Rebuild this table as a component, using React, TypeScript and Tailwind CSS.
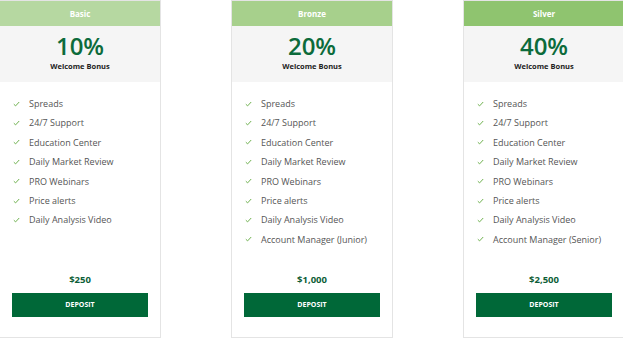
import React from "react";

type Plan = {
  name: string;
  header: string;
  pct: string;
  price: string;
  features: string[];
};

const base = [
  "Spreads",
  "24/7 Support",
  "Education Center",
  "Daily Market Review",
  "PRO Webinars",
  "Price alerts",
  "Daily Analysis Video",
];

const plans: Plan[] = [
  { name: "Basic", header: "bg-[#b6d8a1]", pct: "10%", price: "$250", features: base },
  {
    name: "Bronze",
    header: "bg-[#a7d08c]",
    pct: "20%",
    price: "$1,000",
    features: [...base, "Account Manager (Junior)"],
  },
  {
    name: "Silver",
    header: "bg-[#8fc46f]",
    pct: "40%",
    price: "$2,500",
    features: [...base, "Account Manager (Senior)"],
  },
];

function Check() {
  return (
    <svg width="7" height="6" viewBox="0 0 7 6" className="shrink-0">
      <path d="M0.8 3.2 L2.6 4.9 L6.2 1" fill="none" stroke="#6fb14f" strokeWidth="1" />
    </svg>
  );
}

function Card({ p }: { p: Plan }) {
  return (
    <div className="w-[162px] h-[338px] shrink-0 flex flex-col border border-[#e4e4e4] bg-white">
      <div className={`h-[25px] ${p.header} flex items-center justify-center text-white font-bold text-[8px]`}>
        {p.name}
      </div>
      <div className="h-[56px] bg-[#f5f5f5] flex flex-col items-center pt-[8px]">
        <div className="text-[24px] leading-[24px] text-[#0c6b3b] font-semibold">{p.pct}</div>
        <div className="text-[7.5px] leading-[10px] font-bold text-[#222] mt-[3px]">Welcome Bonus</div>
      </div>
      <div className="flex-1 flex flex-col pt-[12px]">
        {p.features.map((f) => (
          <div key={f} className="h-[19.4px] flex items-center gap-[9px] pl-[13px] text-[9px] text-[#555]">
            <Check />
            <span>{f}</span>
          </div>
        ))}
      </div>
      <div className="text-center text-[9.5px] font-bold text-[#0d5e37] mb-[6px]">{p.price}</div>
      <div className="mx-[12px] h-[24px] bg-[#006838] flex items-center justify-center text-white text-[7px] font-bold mb-[20px]">
        DEPOSIT
      </div>
    </div>
  );
}

export default function App() {
  return (
    <div
      className="w-[624px] h-[338px] overflow-hidden bg-white flex gap-[70px] ml-[-1px]"
      style={{ fontFamily: "'Open Sans', 'Noto Sans', sans-serif" }}
    >
      {plans.map((p) => (
        <Card key={p.name} p={p} />
      ))}
    </div>
  );
}
